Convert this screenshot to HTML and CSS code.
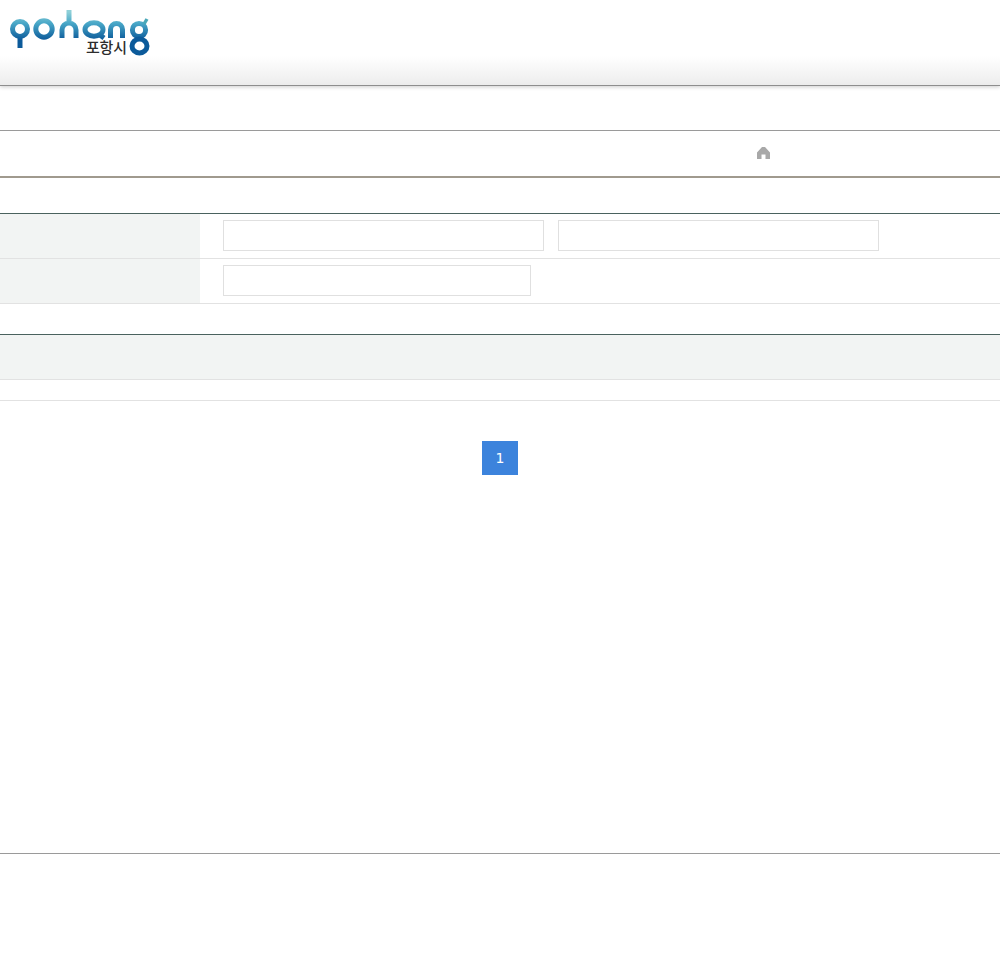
FILE: index.html
```html
<!DOCTYPE html>
<html lang="ko">
<head>
<meta charset="utf-8">
<title>pohang</title>
<link rel="stylesheet" href="styles.css">
</head>
<body>
<header class="site-header">
  <a class="logo" href="#">
    <svg class="logo-mark" width="142" height="46" viewBox="0 0 142 46" fill="none">
      <defs>
        <linearGradient id="gu" gradientUnits="userSpaceOnUse" x1="0" y1="2" x2="0" y2="30">
          <stop offset="0" stop-color="#8fd0d8"/>
          <stop offset="0.4" stop-color="#49a8c8"/>
          <stop offset="1" stop-color="#0c5a9a"/>
        </linearGradient>
      </defs>
      <g stroke="url(#gu)" stroke-width="5">
        <circle cx="10" cy="19" r="7.5"/>
        <path d="M10 26V38"/>
        <circle cx="34" cy="19" r="8.2"/>
        <path d="M52 28V20a7 7 0 0 1 14 0v8M59 0V13"/>
        <ellipse cx="84" cy="19.5" rx="9" ry="6.8"/>
        <path d="M90 25l4 3"/>
        <path d="M100.500 28V19.500a6 6 0 0 1 12 0V28"/>
        <circle cx="129" cy="20" r="6.600"/>
        <ellipse cx="129.500" cy="36" rx="7.500" ry="7" stroke="#0c5a9a"/>
        <path d="M134 14l3-5" stroke="#49a7b8" stroke-width="3.400"/>
      </g>
    </svg>
    <span class="logo-text">포항시</span>
  </a>
</header>

<section class="crumb-bar">
  <svg class="home" width="13" height="12" viewBox="0 0 13 12">
    <path d="M5 0H8L13 5.500V12H8.500V7.500H4.500V12H0V5.500Z" fill="#a8a8a8"/>
  </svg>
</section>

<section class="search">
  <div class="row">
    <div class="label"></div>
    <div class="fields">
      <div class="box wide"></div>
      <div class="box wide"></div>
    </div>
  </div>
  <div class="row">
    <div class="label"></div>
    <div class="fields">
      <div class="box narrow"></div>
    </div>
  </div>
</section>

<section class="list">
  <div class="list-head"></div>
  <div class="list-row"></div>
</section>

<nav class="pager"><a class="page" href="#">1</a></nav>

<footer class="site-footer"></footer>
</body>
</html>
```
FILE: styles.css
```css
* { box-sizing: border-box; }
html, body { margin: 0; padding: 0; }
body {
  height: 954px;
  background: #fff;
  font-family: "DejaVu Sans", "Noto Sans CJK KR", sans-serif;
  overflow: hidden;
}
.site-header {
  height: 86px;
  background: linear-gradient(to bottom, #fff 0, #fff 56px, #f0f0f0 80px, #ececec 85px);
  border-bottom: 1px solid #8e8e8e;
  box-shadow: 0 1px 4px rgba(0,0,0,.2);
  padding: 10px 0 0 10px;
}
.logo { position: relative; display: block; width: 142px; height: 46px; text-decoration: none; }
.logo-mark { display: block; }
.logo-text {
  position: absolute;
  left: 76px;
  top: 28px;
  font: 500 15px/18px "Noto Sans CJK KR", sans-serif;
  letter-spacing: -0.2px;
  color: #2d2d2d;
}
.crumb-bar {
  margin-top: 44px;
  height: 48px;
  border-top: 1px solid #9a9a9a;
  border-bottom: 2px solid #a09a8e;
  padding: 16px 0 0 757px;
}
.home { display: block; }
.search {
  margin-top: 35px;
  border-top: 1px solid #4a625e;
}
.row {
  display: flex;
  height: 45px;
  border-bottom: 1px solid #e2e2e2;
}
.label { width: 200px; background: #f2f4f3; }
.fields { display: flex; gap: 14px; padding: 6px 0 0 23px; }
.box { height: 31px; border: 1px solid #e0e0e0; background: #fff; }
.wide { width: 321px; }
.narrow { width: 308px; }
.list {
  margin-top: 30px;
  border-top: 1px solid #4a625e;
}
.list-head { height: 45px; background: #f2f4f3; border-bottom: 1px solid #e2e2e2; }
.list-row { height: 21px; border-bottom: 1px solid #e2e2e2; }
.pager { display: flex; justify-content: center; margin-top: 40px; }
.page {
  width: 36px;
  height: 34px;
  background: #3c83dc;
  color: #fff;
  font-size: 14px;
  line-height: 34px;
  text-align: center;
  text-decoration: none;
}
.site-footer {
  margin-top: 378px;
  border-top: 1px solid #9a9a9a;
}
```
